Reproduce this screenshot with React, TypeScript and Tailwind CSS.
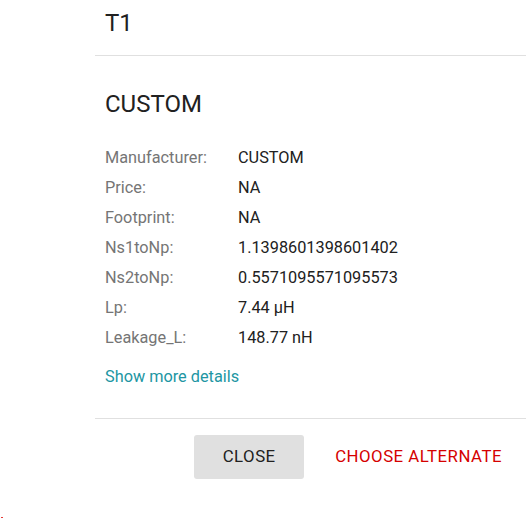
const rows: [string, string][] = [
  ["Manufacturer:", "CUSTOM"],
  ["Price:", "NA"],
  ["Footprint:", "NA"],
  ["Ns1toNp:", "1.1398601398601402"],
  ["Ns2toNp:", "0.5571095571095573"],
  ["Lp:", "7.44 μH"],
  ["Leakage_L:", "148.77 nH"],
];

export default function App() {
  return (
    <div className="relative h-[518px] w-[526px] overflow-hidden bg-white font-['Roboto',sans-serif] text-[#212121]">
      <div className="ml-[95px] flex flex-col">
        {/* header */}
        <div className="h-[56px] border-b border-[#e0e0e0] px-[10px] pt-[7px]">
          <h1 className="text-[24px] leading-[32px]">T1</h1>
        </div>

        {/* body */}
        <div className="px-[10px] pt-[32px]">
          <h2 className="text-[24px] leading-[32px]">CUSTOM</h2>
          <div className="mt-[23px] grid grid-cols-[133px_1fr] text-[16.3px] leading-[30px]">
            {rows.map(([label, value]) => (
              <div key={label} className="contents">
                <span className="text-[#757575]">{label}</span>
                <span>{value}</span>
              </div>
            ))}
          </div>
          <a className="mt-[9px] block text-[16.3px] leading-[30px] text-[#2196a3]">Show more details</a>
        </div>

        {/* actions */}
        <div className="mt-[26px] flex items-center justify-end gap-[21px] border-t border-[#e0e0e0] pr-[14px] pt-[16px]">
          <button className="h-[44px] w-[110px] rounded-[3px] bg-[#e0e0e0] text-[16.8px] tracking-[0.5px] text-[#212121]">
            CLOSE
          </button>
          <button className="h-[44px] px-[10px] text-[16.8px] tracking-[0.5px] text-[#d50000]">
            CHOOSE ALTERNATE
          </button>
        </div>
      </div>
      <span className="absolute left-[1px] top-[517px] h-[1px] w-[2px] bg-[#e53935]" />
    </div>
  );
}
